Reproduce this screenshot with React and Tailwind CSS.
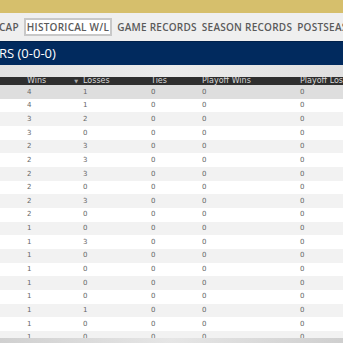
import React from 'react';

const rows = [
  [4, 1], [4, 1], [3, 2], [3, 0], [2, 3], [2, 3], [2, 3], [2, 0], [2, 3], [2, 0],
  [1, 0], [1, 3], [1, 0], [1, 0], [1, 0], [1, 0], [1, 1], [1, 0], [1, 0],
];

const navItems = ['CAP', 'HISTORICAL W/L', 'GAME RECORDS', 'SEASON RECORDS', 'POSTSEASON'];

export default function App() {
  return (
    <div className="relative w-[343px] h-[343px] overflow-hidden bg-white">
      {/* gold strip */}
      <div className="h-[13px] bg-[#d6bf6c]" />

      {/* tabs */}
      <nav
        className="h-[28px] flex items-center gap-[5px] bg-[#efefef] whitespace-nowrap overflow-hidden text-[10px] font-semibold text-[#5a5a5a] tracking-[0.25px]"
        style={{ fontFamily: '"Open Sans", sans-serif' }}
      >
        {navItems.map((item, i) => (
          <span
            key={item}
            className={
              i === 1
                ? 'px-[1px] py-[1px] border-2 border-[#c8c8c8] bg-white leading-[12px]'
                : i === 0
                ? '-ml-[1px] leading-[12px]'
                : 'leading-[12px]'
            }
          >
            {item}
          </span>
        ))}
      </nav>

      {/* team header */}
      <div
        className="h-[24px] flex items-center bg-[#012a5e] border-t border-[#00204a] text-white text-[13px]"
        style={{ fontFamily: '"Open Sans", sans-serif' }}
      >
        <span className="-ml-[1px]">RS (0-0-0)</span>
      </div>

      <div className="h-[12px] bg-gradient-to-r from-[#e2e2e2] via-[#ececec] to-[#e0e0e0]" />

      {/* table */}
      <div className="text-[7px]" style={{ fontFamily: '"DejaVu Sans", sans-serif' }}>
        <div className="grid grid-cols-[83px_68px_51px_98px_1fr] h-[8px] items-center bg-[#2f2f2f] text-[#d8d8d8] text-[8px] leading-[8px] whitespace-nowrap overflow-hidden">
          <div className="flex items-center pl-[27px]">
            <span>Wins</span>
            <span className="ml-auto mr-[5px] text-[5px] text-[#aaa]">▼</span>
          </div>
          <div>Losses</div>
          <div>Ties</div>
          <div>Playoff Wins</div>
          <div>Playoff Losses</div>
        </div>
        {rows.map(([w, l], i) => (
          <div
            key={i}
            className={`grid grid-cols-[83px_68px_51px_98px_1fr] h-[13.67px] items-center text-[#666] ${
              i === 0 ? 'bg-[#dedede]' : i % 2 === 0 ? 'bg-[#f2f2f2]' : 'bg-white'
            }`}
          >
            <div className="pl-[27px]">{w}</div>
            <div>{l}</div>
            <div>0</div>
            <div>0</div>
            <div>0</div>
          </div>
        ))}
      </div>

      {/* bottom scroll shade */}
      <div className="absolute left-0 right-0 bottom-0 h-[5px] bg-gradient-to-r from-[#d0d0d0] via-[#e6e6e6] to-[#cfcfcf]" />
    </div>
  );
}
